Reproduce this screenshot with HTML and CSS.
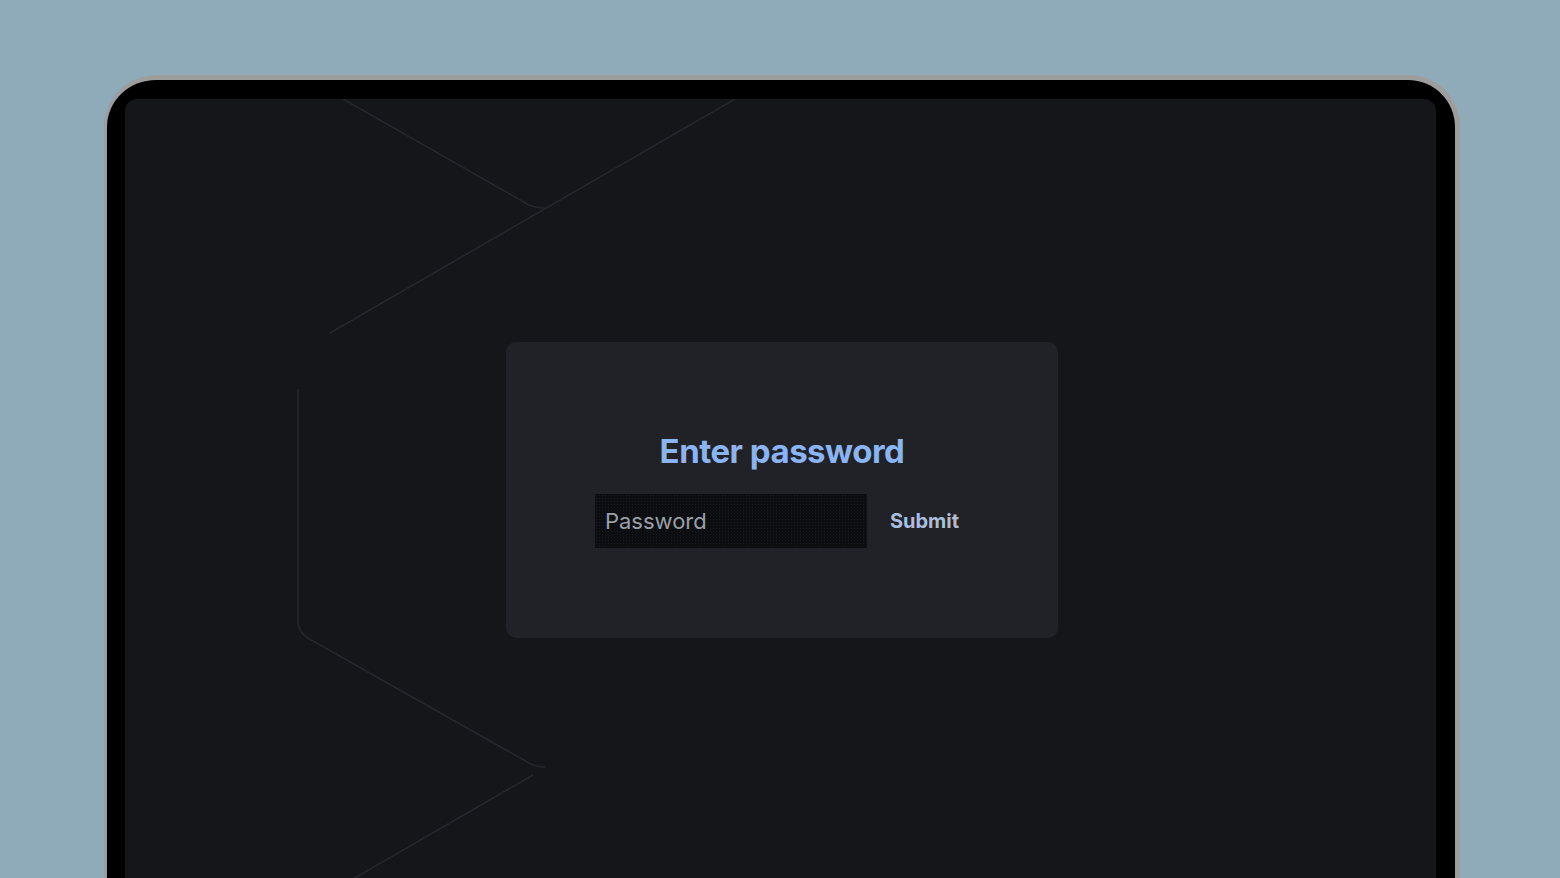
FILE: index.html
```html
<!DOCTYPE html>
<html lang="en">
<head>
    <meta charset="UTF-8">
    <meta name="viewport" content="width=device-width, initial-scale=1.0">
    <title>Enter password</title>
    <link rel="stylesheet" href="styles.css">
</head>
<body>
    <div class="device">
        <main class="screen">
            <!-- faint outline shapes behind the login card -->
            <svg class="backdrop" width="1311" height="800" viewBox="0 0 1311 800" fill="none">
                <path d="M218 0 L404 106 Q411 109 420 109"/>
                <path d="M610 0 L205 234"/>
                <path d="M173 290 L173 521 Q173 535 188 542 L404 664 Q411 668 420 668"/>
                <path d="M408 676 L228 780"/>
            </svg>

            <section class="login">
                <h1>Enter password</h1>
                <form class="login-form" id="loginForm">
                    <input type="password" name="password" placeholder="Password" autocomplete="off">
                    <button type="submit">Submit</button>
                </form>
            </section>
        </main>
    </div>
    <script>
        // Keep the page from reloading on submit
        document.getElementById('loginForm').addEventListener('submit', (e) => {
            e.preventDefault();
        });
    </script>
</body>
</html>
```

FILE: styles.css
```css
html, body {
    overflow: hidden;
}

body {
    font-family: Inter, 'Noto Sans', sans-serif;
    margin: 0;
    padding: 75px 0 0 104px;
    background-color: #8fabba;
    height: 878px;
    box-sizing: border-box;
}

.device {
    width: 1356px;
    height: 840px;
    box-sizing: border-box;
    background-color: #000;
    border: solid #9d9d9d;
    border-width: 5px 5px 0 3px;
    border-radius: 52px 52px 0 0;
    padding: 19px 19px 0 18px;
}

.screen {
    position: relative;
    height: 100%;
    background-color: #15161a;
    border-radius: 12px 12px 0 0;
    overflow: hidden;
    display: flex;
    justify-content: center;
    align-items: flex-start;
    padding-top: 243px;
    box-sizing: border-box;
}

.backdrop {
    position: absolute;
    left: 0;
    top: 0;
    stroke: #25272c;
    stroke-width: 1.6;
}

.login {
    position: relative;
    width: 552px;
    height: 296px;
    box-sizing: border-box;
    margin-left: 3px;
    padding-top: 89px;
    background-color: #212227;
    border-radius: 10px;
    text-align: center;
}

.login h1 {
    margin: 0;
    font-size: 33px;
    line-height: 40px;
    font-weight: 700;
    color: #8ab4f3;
    letter-spacing: -0.5px;
}

.login-form {
    display: flex;
    justify-content: center;
    align-items: center;
    margin-top: 23px;
}

.login-form input {
    width: 272px;
    height: 54px;
    box-sizing: border-box;
    padding: 0 10px;
    border: none;
    outline: none;
    background-color: #0c0d10;
    background-image: radial-gradient(#1a1b1f 0.7px, transparent 0.9px);
    background-size: 3px 3px;
    color: #e3e3e3;
    font-family: inherit;
    font-size: 22px;
}

.login-form input::placeholder {
    color: #9aa0a6;
}

.login-form button {
    background: none;
    border: none;
    padding: 0 10px 0 23px;
    height: 54px;
    color: #a8bfdf;
    font-family: inherit;
    font-size: 20px;
    font-weight: 700;
    cursor: pointer;
}
```
